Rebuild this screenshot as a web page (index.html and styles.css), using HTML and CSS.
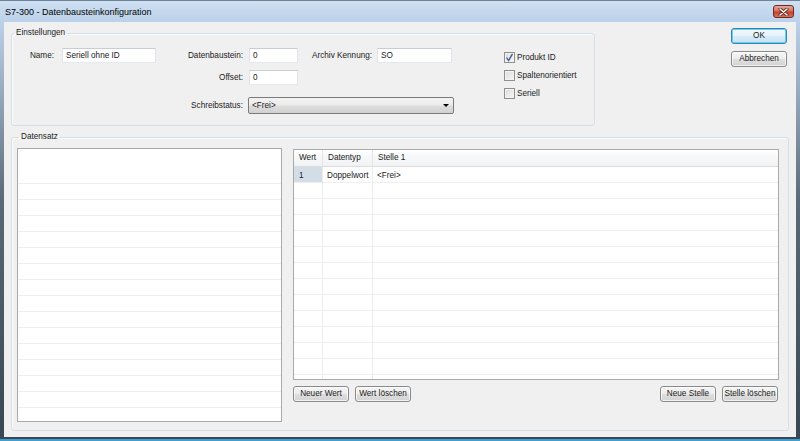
FILE: index.html
```html
<!DOCTYPE html>
<html lang="de">
<head>
<meta charset="utf-8">
<title>S7-300 - Datenbausteinkonfiguration</title>
<link rel="stylesheet" href="styles.css">
</head>
<body>
<div class="window">
  <div class="titlebar">
    <span class="title">S7-300 - Datenbausteinkonfiguration</span>
    <div class="close">
      <svg width="11" height="8" viewBox="0 0 11 8"><path d="M2 1 L9 7 M9 1 L2 7" stroke="#5a1a12" stroke-width="3" stroke-linecap="round"/><path d="M2 1 L9 7 M9 1 L2 7" stroke="#ffffff" stroke-width="1.6" stroke-linecap="round"/></svg>
    </div>
  </div>
  <div class="client">
    <div class="top">
      <fieldset class="group settings">
        <legend>Einstellungen</legend>
        <div class="settings-body">
          <div class="form">
            <span class="lbl a-nl">Name:</span>
            <div class="input a-ni">Seriell ohne ID</div>
            <span class="lbl a-dl">Datenbaustein:</span>
            <div class="input a-di">0</div>
            <span class="lbl left a-al">Archiv Kennung:</span>
            <div class="input a-ai">SO</div>
            <span class="lbl a-ol">Offset:</span>
            <div class="input a-oi">0</div>
            <span class="lbl a-sl">Schreibstatus:</span>
            <div class="combo a-cb"><span>&lt;Frei&gt;</span><span class="arrow"></span></div>
          </div>
          <div class="checks">
            <div class="check"><span class="cb"><svg width="9" height="9" viewBox="0 0 9 9"><path d="M1.5 4.5 L3.6 7.5 L7.5 0.8" fill="none" stroke="#3d5290" stroke-width="1.3"/></svg></span><span>Produkt ID</span></div>
            <div class="check"><span class="cb"></span><span>Spaltenorientiert</span></div>
            <div class="check"><span class="cb"></span><span>Seriell</span></div>
          </div>
        </div>
      </fieldset>
      <div class="dialog-buttons">
        <div class="btn default">OK</div>
        <div class="btn">Abbrechen</div>
      </div>
    </div>
    <fieldset class="group dataset">
      <legend>Datensatz</legend>
      <div class="dataset-body">
        <div class="listbox">
          <div class="lrow first"></div>
          <div class="lrow"></div><div class="lrow"></div><div class="lrow"></div><div class="lrow"></div>
          <div class="lrow"></div><div class="lrow"></div><div class="lrow"></div><div class="lrow"></div>
          <div class="lrow"></div><div class="lrow"></div><div class="lrow"></div><div class="lrow"></div>
          <div class="lrow"></div><div class="lrow"></div><div class="lrow"></div><div class="lrow"></div>
        </div>
        <div class="table-panel">
          <div class="grid-table">
            <div class="th">Wert</div><div class="th">Datentyp</div><div class="th last">Stelle 1</div>
            <div class="td sel">1</div><div class="td">Doppelwort</div><div class="td last">&lt;Frei&gt;</div>
            <div class="td"></div><div class="td"></div><div class="td last"></div>
            <div class="td"></div><div class="td"></div><div class="td last"></div>
            <div class="td"></div><div class="td"></div><div class="td last"></div>
            <div class="td"></div><div class="td"></div><div class="td last"></div>
            <div class="td"></div><div class="td"></div><div class="td last"></div>
            <div class="td"></div><div class="td"></div><div class="td last"></div>
            <div class="td"></div><div class="td"></div><div class="td last"></div>
            <div class="td"></div><div class="td"></div><div class="td last"></div>
            <div class="td"></div><div class="td"></div><div class="td last"></div>
            <div class="td"></div><div class="td"></div><div class="td last"></div>
            <div class="td"></div><div class="td"></div><div class="td last"></div>
            <div class="td"></div><div class="td"></div><div class="td last"></div>
            <div class="td"></div><div class="td"></div><div class="td last"></div>
          </div>
          <div class="table-buttons">
            <div class="btn">Neuer Wert</div>
            <div class="btn">Wert löschen</div>
            <div class="spacer"></div>
            <div class="btn">Neue Stelle</div>
            <div class="btn">Stelle löschen</div>
          </div>
        </div>
      </div>
    </fieldset>
  </div>
</div>
</body>
</html>
```
FILE: styles.css
```css
html, body {
  margin: 0;
  padding: 0;
  background: #3a4652;
}
body {
  font-family: "Liberation Sans", Arial, sans-serif;
  font-size: 8.2px;
  color: #1a1a1a;
}
.window {
  width: 800px;
  height: 441px;
  box-sizing: border-box;
  display: flex;
  flex-direction: column;
  overflow: hidden;
  background: linear-gradient(to bottom, #cfe0f2 0px, #bcd2ea 21px, #98abbf 90px, #5a6977 200px, #3a4652 100%);
  border-bottom: 2px solid #3f9fcf;
}
.titlebar {
  height: 22px;
  flex: none;
  display: flex;
  align-items: center;
  justify-content: space-between;
  padding: 0 6px 0 5px;
  border-top: 1px solid #6f8397;
  box-sizing: border-box;
}
.title {
  font-size: 9px;
  line-height: 10px;
  color: #000;
}
.close {
  width: 21px;
  height: 13px;
  box-sizing: border-box;
  border: 1px solid #6e2a20;
  border-radius: 3px;
  background: linear-gradient(to bottom, #e8a898 0%, #d6705e 45%, #c0432f 55%, #d5725a 100%);
  display: flex;
  align-items: center;
  justify-content: center;
}
.client {
  flex: 1;
  margin: 0 4px 2px;
  background: #f0f0f0;
  padding: 6px 7px;
  display: flex;
  flex-direction: column;
  gap: 6px;
  min-height: 0;
}
.top {
  display: flex;
  align-items: flex-start;
}
.group {
  margin: 0;
  min-width: 0;
  border: 1px solid #d5dfe5;
  border-radius: 3px;
  box-shadow: inset 1px 1px 0 #fbfcfd;
}
.group legend {
  padding: 0 2px;
  margin-left: 2px;
  line-height: 10px;
  height: 10px;
  color: #1a1a1a;
}
.settings {
  width: 584px;
  box-sizing: border-box;
  padding: 10px 0 11px 0;
}
.settings-body {
  display: flex;
  align-items: flex-start;
}
.form {
  display: grid;
  grid-template-columns: 42px 8px 94px 87px 6px 49px 14px 60px 5px 75px;
  grid-template-rows: 15px 7px 15px 12px 17px;
  grid-template-areas:
    "nl . ni dl . di . al . ai"
    ". . . . . . . . . ."
    ". . . ol . oi . . . ."
    ". . . . . . . . . ."
    ". . . sl . cb cb cb cb cb";
}
.a-nl { grid-area: nl; }
.a-ni { grid-area: ni; }
.a-dl { grid-area: dl; }
.a-di { grid-area: di; }
.a-al { grid-area: al; }
.a-ai { grid-area: ai; }
.a-ol { grid-area: ol; }
.a-oi { grid-area: oi; }
.a-sl { grid-area: sl; }
.a-cb { grid-area: cb; }
.lbl {
  align-self: center;
  text-align: right;
  white-space: nowrap;
  margin-top: -1px;
}
.lbl.left { text-align: left; }
.input {
  box-sizing: border-box;
  background: #fff;
  border: 1px solid;
  border-color: #c9ccd2 #e2e3ea #e3e9ef #e2e3ea;
  padding: 0 3px;
  line-height: 13px;
  white-space: nowrap;
  overflow: hidden;
}
.combo {
  margin-left: -1px;
  margin-right: -2px;
  box-sizing: border-box;
  border: 1px solid #7a7a7a;
  border-radius: 2px;
  background: linear-gradient(to bottom, #f3f3f3 0%, #ebebeb 48%, #dddddd 52%, #d2d2d2 100%);
  display: flex;
  align-items: center;
  justify-content: space-between;
  padding: 0 4px 0 3px;
  line-height: 15px;
}
.arrow {
  width: 0;
  height: 0;
  border-left: 3px solid transparent;
  border-right: 3px solid transparent;
  border-top: 3px solid #000;
}
.checks {
  margin-left: 52px;
  margin-top: 4px;
  display: flex;
  flex-direction: column;
  gap: 7px;
}
.check {
  display: flex;
  align-items: center;
  gap: 2px;
  height: 11px;
  white-space: nowrap;
}
.cb {
  width: 9px;
  height: 9px;
  border: 1px solid #8f8f8f;
  background: linear-gradient(135deg, #dcdcdc 0%, #f6f6f6 100%);
  box-shadow: inset 0 0 0 1px #f2f2f2;
  display: flex;
  align-items: center;
  justify-content: center;
  flex: none;
}
.dialog-buttons {
  margin-left: auto;
  margin-right: 2px;
  display: flex;
  flex-direction: column;
  gap: 7px;
}
.btn {
  box-sizing: border-box;
  width: 56px;
  height: 16px;
  border: 1px solid #8a8a8a;
  border-radius: 3px;
  background: linear-gradient(to bottom, #f6f6f6 0%, #ececec 48%, #dfdfdf 52%, #d3d3d3 100%);
  box-shadow: inset 0 0 0 1px rgba(255,255,255,0.7);
  text-align: center;
  line-height: 14px;
  white-space: nowrap;
  color: #1a1a1a;
}
.btn.default {
  border-color: #3c7fb1;
  box-shadow: inset 0 0 0 1px #62d0f7;
  background: linear-gradient(to bottom, #f4fafd 0%, #e6f3fb 48%, #d6ebf8 52%, #c8e3f5 100%);
}
.dataset {
  flex: 1;
  box-sizing: border-box;
  padding: 6px 9px 8px 5px;
  min-height: 0;
}
.dataset-body {
  display: flex;
  gap: 11px;
  height: 274px;
}
.listbox {
  width: 265px;
  height: 274px;
  box-sizing: border-box;
  border: 1px solid #a9a9a9;
  background: #fff;
  display: flex;
  flex-direction: column;
  overflow: hidden;
  flex: none;
}
.lrow {
  height: 15px;
  flex: none;
  border-bottom: 1px solid #eeeeee;
}
.lrow.first {
  height: 34px;
}
.table-panel {
  flex: 1;
  display: flex;
  flex-direction: column;
  gap: 6px;
  padding-top: 1px;
}
.grid-table {
  height: 231px;
  box-sizing: border-box;
  border: 1px solid #aaaaaa;
  background: #fff;
  display: grid;
  grid-template-columns: 29px 50px 1fr;
  grid-auto-rows: 16px;
  grid-template-rows: 17px;
  overflow: hidden;
}
.th {
  background: linear-gradient(to bottom, #ffffff 0%, #f7f8f9 40%, #f1f2f4 100%);
  border-bottom: 1px solid #dcdcdc;
  border-right: 1px solid #e4e4e4;
  padding-left: 5px;
  line-height: 16px;
  white-space: nowrap;
}
.td {
  border-bottom: 1px solid #efefef;
  border-right: 1px solid #ececec;
  padding-left: 4px;
  line-height: 17px;
  white-space: nowrap;
}
.th.last, .td.last {
  border-right: none;
}
.td.sel {
  background: #d3dde8;
  padding-left: 5px;
}
.table-buttons {
  display: flex;
  gap: 6px;
  padding: 0 1px 0 0;
}
.spacer {
  flex: 1;
}
```
